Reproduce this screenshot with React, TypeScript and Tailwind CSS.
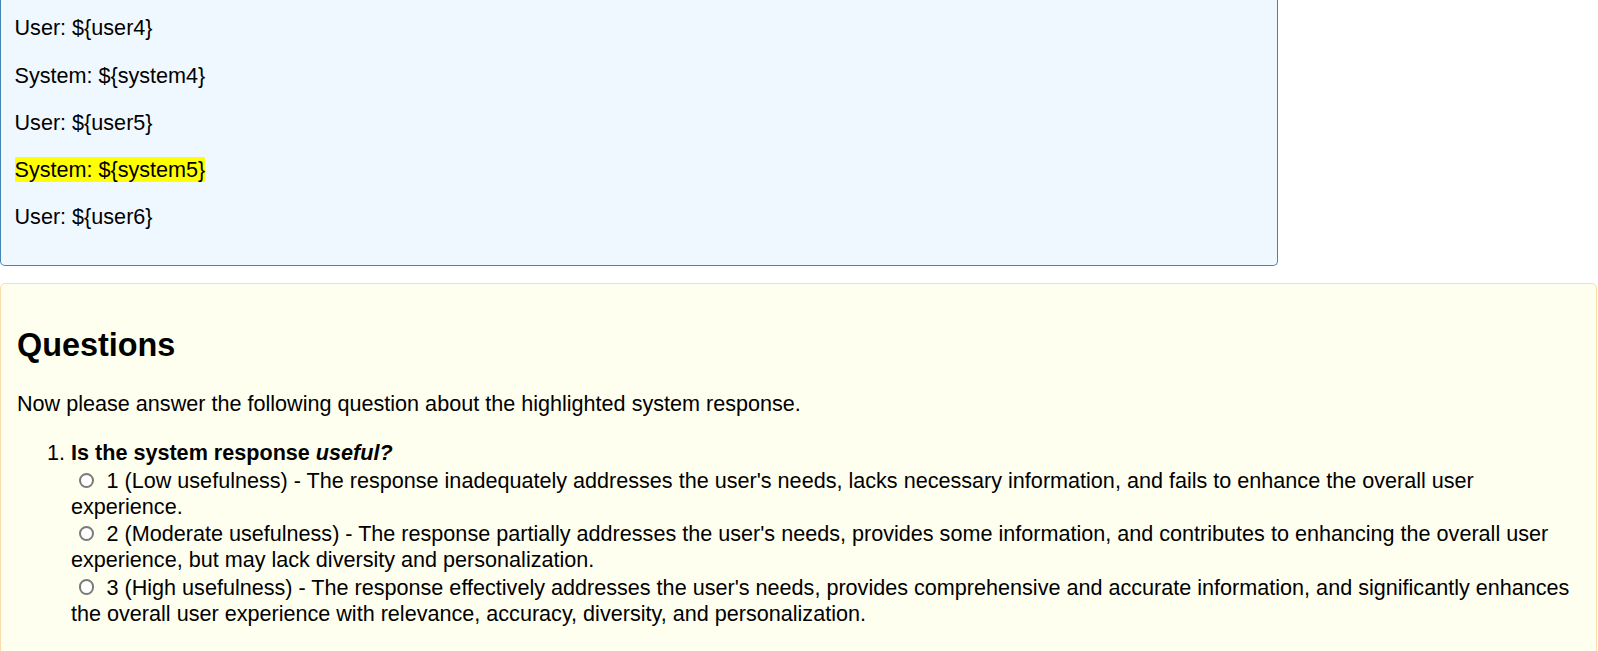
const turns = [
  { who: 'User', value: '${user4}' },
  { who: 'System', value: '${system4}' },
  { who: 'User', value: '${user5}' },
  { who: 'System', value: '${system5}', highlight: true },
  { who: 'User', value: '${user6}' },
];

const options = [
  "1 (Low usefulness) - The response inadequately addresses the user's needs, lacks necessary information, and fails to enhance the overall user experience.",
  "2 (Moderate usefulness) - The response partially addresses the user's needs, provides some information, and contributes to enhancing the overall user experience, but may lack diversity and personalization.",
  "3 (High usefulness) - The response effectively addresses the user's needs, provides comprehensive and accurate information, and significantly enhances the overall user experience with relevance, accuracy, diversity, and personalization.",
];

export default function App() {
  return (
    <div className="min-h-screen bg-white text-black text-[21.6px] leading-[25.7px] font-['Liberation_Sans',Arial,sans-serif]">
      <div className="w-[80%] bg-[#f0f8ff] border border-t-0 border-[#4682b4] rounded-b-[5px] px-[13.5px] pt-[15.3px] pb-[13.5px]">
        {turns.map((t, i) => (
          <p key={i} className="mt-0 mb-[21.6px]">
            <span className={t.highlight ? 'bg-[#ffff00]' : ''}>
              {t.who}: {t.value}
            </span>
          </p>
        ))}
      </div>

      <div className="mt-[17px] mr-[1px] bg-[#fffff0] border border-[#fddcab] rounded-[5px] px-[16px] pt-[16px] pb-[16px]">
        <h2 className="text-[32.4px] leading-[normal] font-bold my-[26.9px]">Questions</h2>
        <p className="my-[21.6px]">Now please answer the following question about the highlighted system response.</p>
        <ol className="list-decimal pl-[54px] mt-[23.6px] mb-[21.6px]">
          <li>
            <b>
              Is the system response <i>useful?</i>
            </b>
            {options.map((o, i) => (
              <span key={i}>
                <br />
                <label>
                  <input
                    type="radio"
                    name="useful"
                    className="appearance-none inline-block w-[15.5px] h-[15.5px] rounded-full border-2 border-[#7a7a7a] bg-white ml-[7.5px] mr-[6.5px] mt-[6.5px] mb-0 align-baseline"
                  />{' '}
                  {o}
                </label>
              </span>
            ))}
          </li>
        </ol>
      </div>
    </div>
  );
}
